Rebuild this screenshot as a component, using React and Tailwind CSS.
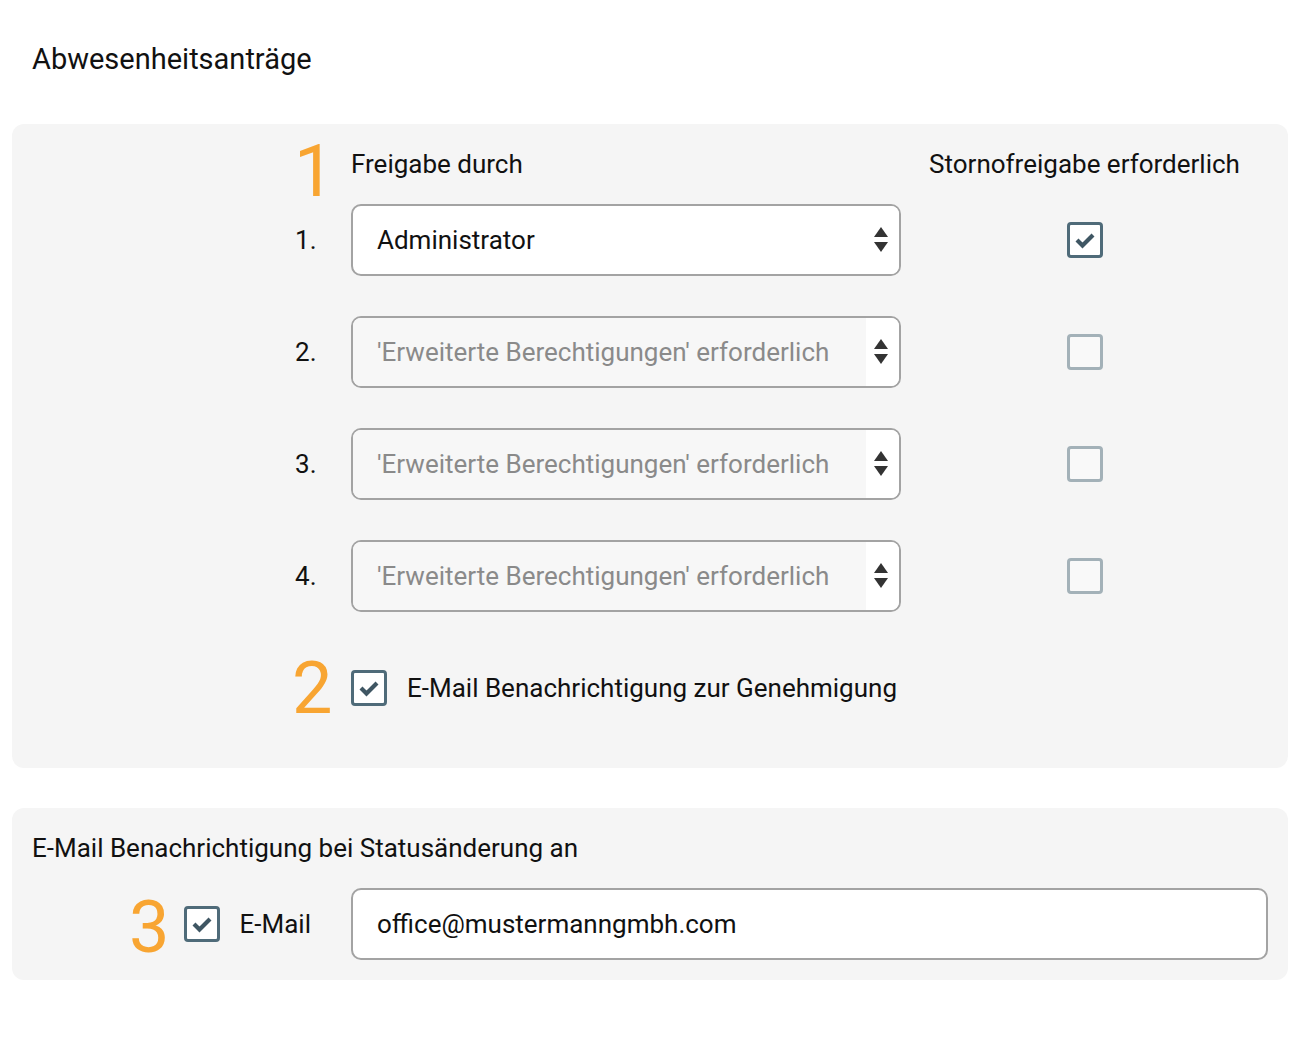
import React from 'react';

const ORANGE = 'text-[#f8a532]';

function Arrows() {
  return (
    <svg width="14" height="26" viewBox="0 0 14 26" className="text-[#333]">
      <path d="M7 0 L14 10 L0 10 Z" fill="currentColor" />
      <path d="M0 15 L14 15 L7 25 Z" fill="currentColor" />
    </svg>
  );
}

function Select({ value, disabled }) {
  return (
    <div className="h-[72px] flex border-2 border-[#a3a3a3] rounded-[10px] overflow-hidden bg-white">
      <div
        className={`flex-1 flex items-center pl-6 text-[26px] ${
          disabled ? 'bg-[#f7f7f7] text-[#8a8a8a]' : 'text-[#111]'
        }`}
      >
        {value}
      </div>
      <div className="w-[33px] flex items-center justify-start pl-[8px] bg-white">
        <Arrows />
      </div>
    </div>
  );
}

function Checkbox({ checked }) {
  return (
    <div
      className={`w-9 h-9 shrink-0 rounded-[4px] border-[3px] flex items-center justify-center ${
        checked ? 'border-[#4f6b79] bg-white' : 'border-[#a3b1b8] bg-[#f9f9f9]'
      }`}
    >
      {checked && (
        <svg width="26" height="26" viewBox="0 0 26 26">
          <path d="M5 13 L10.5 18.5 L21 8" fill="none" stroke="#3f5663" strokeWidth="4.2" strokeLinejoin="miter" />
        </svg>
      )}
    </div>
  );
}

function Marker({ n, className }) {
  return (
    <span className={`absolute leading-none text-[72px] ${ORANGE} ${className}`}>{n}</span>
  );
}

export default function App() {
  const rows = [
    { value: 'Administrator', disabled: false, storno: true },
    { value: "'Erweiterte Berechtigungen' erforderlich", disabled: true, storno: false },
    { value: "'Erweiterte Berechtigungen' erforderlich", disabled: true, storno: false },
    { value: "'Erweiterte Berechtigungen' erforderlich", disabled: true, storno: false },
  ];

  return (
    <div className="min-h-[1052px] bg-white pl-3 pr-2 text-[#111]" style={{ fontFamily: 'Roboto, "Liberation Sans", sans-serif' }}>
      <h1 className="pt-10 pl-5 h-[124px] text-[29px] leading-[38px] font-normal">Abwesenheitsanträge</h1>

      {/* Freigabe panel */}
      <div className="bg-[#f5f5f5] rounded-xl pt-5 pb-[44px] pr-5">
        <div className="grid grid-cols-[339px_550px_1fr] items-center">
          <div className="h-10 relative">
            <Marker n="1" className="left-[282px] top-[-8px]" />
          </div>
          <div className="h-10 flex items-center text-[26px]">Freigabe durch</div>
          <div className="h-10 flex items-center justify-center text-[26px]">Stornofreigabe erforderlich</div>
        </div>

        <div className="mt-5 flex flex-col gap-10">
          {rows.map((r, i) => (
            <div key={i} className="grid grid-cols-[339px_550px_1fr] items-center">
              <div className="pl-[283px] text-[26px]">{i + 1}.</div>
              <Select value={r.value} disabled={r.disabled} />
              <div className="flex justify-center">
                <Checkbox checked={r.storno} />
              </div>
            </div>
          ))}
        </div>

        <div className="mt-10 h-[72px] grid grid-cols-[339px_1fr] items-center">
          <div className="h-full relative">
            <Marker n="2" className="left-[280px] top-[1px]" />
          </div>
          <div className="flex items-center gap-5">
            <Checkbox checked />
            <span className="text-[26px]">E-Mail Benachrichtigung zur Genehmigung</span>
          </div>
        </div>
      </div>

      {/* Status panel */}
      <div className="mt-10 bg-[#f5f5f5] rounded-xl pt-5 pb-5 pr-5">
        <div className="pl-5 h-10 flex items-center text-[26px]">E-Mail Benachrichtigung bei Statusänderung an</div>
        <div className="mt-5 grid grid-cols-[339px_1fr] items-center">
          <div className="flex items-center justify-end pr-10 gap-5">
            <div className="relative">
              <Marker n="3" className="right-[50px] top-[-14px]" />
              <Checkbox checked />
            </div>
            <span className="text-[26px]">E-Mail</span>
          </div>
          <div className="h-[72px] flex items-center border-2 border-[#a3a3a3] rounded-[10px] bg-white pl-6 text-[26px]">
            office@mustermanngmbh.com
          </div>
        </div>
      </div>
    </div>
  );
}
